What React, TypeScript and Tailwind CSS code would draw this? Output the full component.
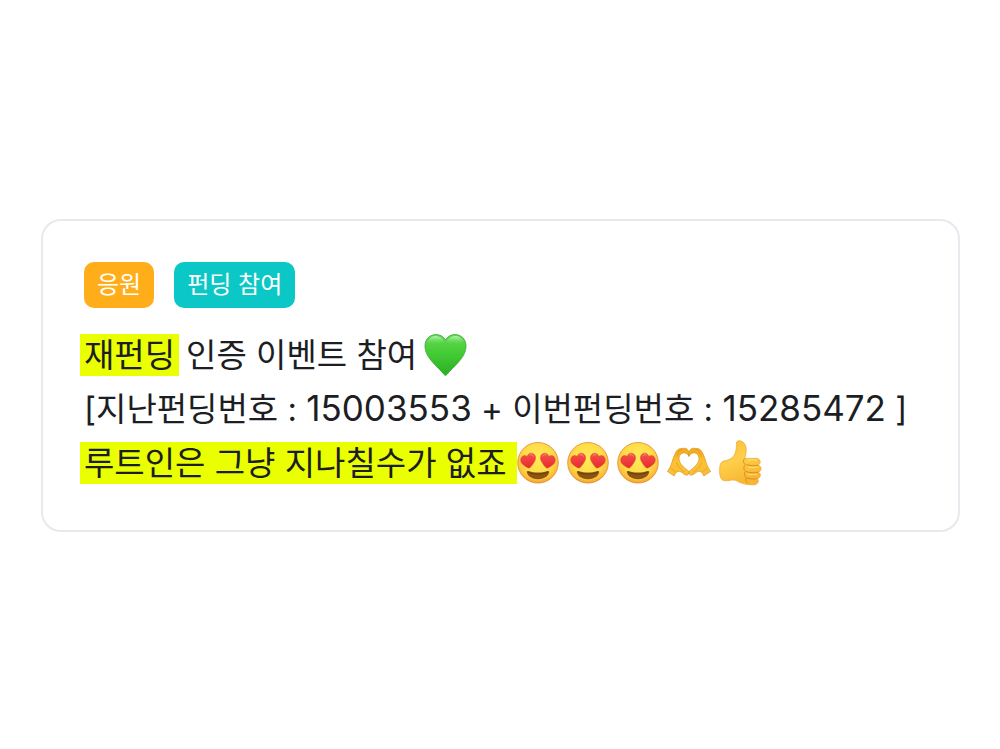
import type { ReactNode } from 'react';

function Tag({ className, children }: { className: string; children: ReactNode }) {
  return (
    <span className={`flex h-[46px] items-center rounded-[10px] px-[13px] text-2xl text-white ${className}`}>
      {children}
    </span>
  );
}

function Highlight({ className = 'pr-1', children }: { className?: string; children: ReactNode }) {
  return (
    <mark className={`-ml-1 flex h-[42px] items-center bg-[#eaff00] pl-1 text-inherit ${className}`}>{children}</mark>
  );
}

function GreenHeart() {
  return (
    <svg viewBox="0 0 44 44" className="ml-[7px] size-[43px] shrink-0" role="img" aria-label="green heart">
      <defs>
        <linearGradient id="heart-fill" x1="0" y1="0" x2="0" y2="1">
          <stop offset="0" stopColor="#66d957" />
          <stop offset="0.45" stopColor="#44cc35" />
          <stop offset="1" stopColor="#2cae24" />
        </linearGradient>
        <linearGradient id="heart-shine" x1="0" y1="0" x2="0" y2="1">
          <stop offset="0" stopColor="#d9ffd0" stopOpacity="0.7" />
          <stop offset="1" stopColor="#7be66b" stopOpacity="0" />
        </linearGradient>
      </defs>
      <path
        d="M22 6C19.5 2.5 16.5 .6 12.2 .6C5.8 .6 1 5.6 1 12.1C1 18.6 4.3 23.9 9 29.1C13 33.6 17.5 37.6 20.5 41.4C21.5 42.6 22.5 42.6 23.5 41.4C26.5 37.6 31 33.6 35 29.1C39.7 23.9 43 18.6 43 12.1C43 5.6 38.2 .6 31.8 .6C27.5 .6 24.5 2.5 22 6Z"
        fill="url(#heart-fill)"
        stroke="#35a82d"
        strokeWidth="0.8"
      />
      <path d="M3.5 10C4 4.5 8 2 12 2C16 2 19 4.3 20.5 7.5C17 11 8 8 3.5 10Z" fill="url(#heart-shine)" />
      <path d="M40.5 10C40 4.5 36 2 32 2C28 2 25 4.3 23.5 7.5C27 11 36 8 40.5 10Z" fill="url(#heart-shine)" />
    </svg>
  );
}

function HeartEyes() {
  return (
    <svg viewBox="0 0 42 42" className="size-[42px] shrink-0" role="img" aria-label="heart eyes">
      <defs>
        <radialGradient id="face-fill" cx="0.5" cy="0.4" r="0.62">
          <stop offset="0" stopColor="#ffec58" />
          <stop offset="0.6" stopColor="#ffdc48" />
          <stop offset="0.85" stopColor="#fcbd3a" />
          <stop offset="1" stopColor="#ee962a" />
        </radialGradient>
        <linearGradient id="eye-fill" x1="0" y1="0" x2="0" y2="1">
          <stop offset="0" stopColor="#f8504a" />
          <stop offset="1" stopColor="#e52a2f" />
        </linearGradient>
      </defs>
      <circle cx="21" cy="20.8" r="20.3" fill="url(#face-fill)" stroke="#e08a35" strokeWidth="0.8" />
      <path
        d="M10.2 14.5C11 11.3 14.4 10.3 16.8 12.1C19.1 13.9 19 17.2 17.4 19.8C16.1 22 14.7 24 12.9 25.7C12.4 26.2 11.8 26.2 11.2 25.9C8.6 24.8 6.1 23.2 4.7 21.3C3.1 18.9 3.4 15.5 5.8 14.1C7.4 13.3 9.1 13.5 10.2 14.5Z"
        fill="url(#eye-fill)"
        stroke="#d9532a"
        strokeWidth="0.5"
      />
      <path
        d="M31.8 14.5C31 11.3 27.6 10.3 25.2 12.1C22.9 13.9 23 17.2 24.6 19.8C25.9 22 27.3 24 29.1 25.7C29.6 26.2 30.2 26.2 30.8 25.9C33.4 24.8 35.9 23.2 37.3 21.3C38.9 18.9 38.6 15.5 36.2 14.1C34.6 13.3 32.9 13.5 31.8 14.5Z"
        fill="url(#eye-fill)"
        stroke="#d9532a"
        strokeWidth="0.5"
      />
      <path d="M12.5 12.9Q15 11.9 16.8 14.4M25.6 14.1Q27.3 11.9 29.5 12.9" fill="none" stroke="#ff8a7b" />
      <path
        d="M9.9 30.6C9.6 29.2 10.4 28.6 11.7 29C17.6 31 24.4 31 30.3 29C31.6 28.6 32.4 29.2 32.1 30.6C31 34.7 26.6 37.2 21 37.2C15.4 37.2 11 34.7 9.9 30.6Z"
        fill="#8a5513"
      />
      <path d="M11.4 30.5Q21 33.7 30.6 30.5" fill="none" stroke="#6c3c0b" />
    </svg>
  );
}

function HeartHand() {
  return (
    <>
      <path
        d="M22 10.5C21.4 7.8 20 6.2 17.6 6.2C16.6 6.1 15.8 6.3 15.2 6.6C12.7 6 10.3 7.3 9 9.8C7.2 13.1 5.8 17 4.8 20.6C4 23.9 2 27 .4 29.4L7.2 34C8.4 31 9.8 29.4 12 29.2C14.8 29.4 17 33.2 19.6 33.2C21.2 33.2 22 32 22 29.4C17.6 26 13 22.4 12.2 18C11.6 14.2 13.6 11.2 16.6 10.9C19.2 10.8 21.2 12.4 22 14.4Z"
        fill="url(#hand-fill)"
        stroke="#d88f17"
        strokeWidth="0.6"
      />
      <path d="M15.2 6.8C12.4 8.2 10.8 11 9.8 14.5M9.6 20.4C10.4 24.4 13.6 27.6 18 30.4M3.2 26L8.6 29.6" fill="none" stroke="#d8951d" strokeWidth="0.6" />
    </>
  );
}

function HeartHands() {
  return (
    <svg viewBox="0 0 44 42" className="h-[42px] w-11 shrink-0" role="img" aria-label="heart hands">
      <defs>
        <linearGradient id="hand-fill" x1="0" y1="0" x2="0" y2="1">
          <stop offset="0" stopColor="#efa81e" />
          <stop offset="0.5" stopColor="#fcc233" />
          <stop offset="1" stopColor="#f8be38" />
        </linearGradient>
      </defs>
      <HeartHand />
      <g transform="matrix(-1 0 0 1 44 0)">
        <HeartHand />
      </g>
    </svg>
  );
}

function ThumbsUp() {
  return (
    <svg viewBox="0 0 44 46" className="h-[46px] w-11 shrink-0" role="img" aria-label="thumbs up">
      <defs>
        <linearGradient id="thumb-fill" x1="0" y1="0" x2="0.4" y2="1">
          <stop offset="0" stopColor="#f9bd3a" />
          <stop offset="0.5" stopColor="#ffcf4a" />
          <stop offset="1" stopColor="#f7b634" />
        </linearGradient>
      </defs>
      <path
        d="M17.5 2.8C17.6 1.1 19.4 .4 21.2 .8C24.8 1.6 27 4.8 27.2 8.8C27.4 12 26.4 15.6 26 18.4L36.5 18.3C39.6 18.3 41.2 19.7 41.2 21.8C41.2 23.7 40.2 24.8 38.8 25.2C41 25.5 42.2 27 42 29C41.8 31 40.6 32 39 32.2C40.8 32.7 41.6 34 41.3 35.7C41 37.4 39.6 38.5 37.9 38.6C39.3 39.3 39.7 40.6 39.2 42C38.5 44 36.5 44.8 33.7 44.8C27.7 44.9 22.5 43.6 18 41C14 38.6 9.6 41.6 5 40.6C1.6 39.8 .5 35.5 .6 30.4C.7 25.6 1.4 21.8 4.6 21.1C9 20.4 12.7 18.8 14.8 15.8C17.6 11.8 17.3 7 17.5 2.8Z"
        fill="url(#thumb-fill)"
        stroke="#eca62e"
        strokeWidth="0.7"
      />
      <path
        d="M39 25.2C35.5 26.2 30.7 25.8 27.5 24.5M39 32.2C35.5 33.2 30.5 32.8 27 31.5M37.9 38.6C34.5 39.5 30.5 39 27.5 37.8M26 18.4C23.7 20.1 24 22.8 26.3 24.5C24.3 26.8 24.5 29.8 26.5 31.5C24.7 33.5 25 36.2 27.5 37.8C25.8 39.5 26.5 41.7 28.8 42.5"
        fill="none"
        stroke="#dc8e1d"
        strokeWidth="1"
      />
      <path d="M29 20Q34 19.2 38 20.5M29 27.3Q34 27.5 39 27M29 34.4Q34 35 38 34.2" fill="none" stroke="#ffe26c" />
    </svg>
  );
}

export default function App() {
  return (
    <main className="flex min-h-screen items-center justify-center bg-white pt-[2px] pr-10 pl-[41px] font-['Inter','Noto_Sans_CJK_KR',sans-serif]">
      <article lang="ko" className="w-full rounded-[20px] border-2 border-[#e8e8ee] px-[41px] pt-[41px] pb-10">
        <div className="flex gap-5">
          <Tag className="bg-[#ffae1a]">응원</Tag>
          <Tag className="bg-[#0bc8c6]">펀딩 참여</Tag>
        </div>
        <div className="mt-5 text-[33px] leading-[54px] whitespace-pre text-[#1c1e23]">
          <p className="flex h-[54px] items-center">
            <Highlight>재펀딩</Highlight>
            <span className="ml-[7px]">인증 이벤트 참여</span>
            <GreenHeart />
          </p>
          <p className="h-[54px]">
            [지난펀딩번호 : <span className="text-[35px] leading-none">15003553</span> + 이번펀딩번호 :{' '}
            <span className="text-[35px] leading-none">15285472</span> ]
          </p>
          <p className="flex h-[54px] items-center">
            <Highlight className="pr-[10px]">루트인은 그냥 지나칠수가 없죠</Highlight>
            <span className="flex items-center gap-2">
              <HeartEyes />
              <HeartEyes />
              <HeartEyes />
              <HeartHands />
              <ThumbsUp />
            </span>
          </p>
        </div>
      </article>
    </main>
  );
}
